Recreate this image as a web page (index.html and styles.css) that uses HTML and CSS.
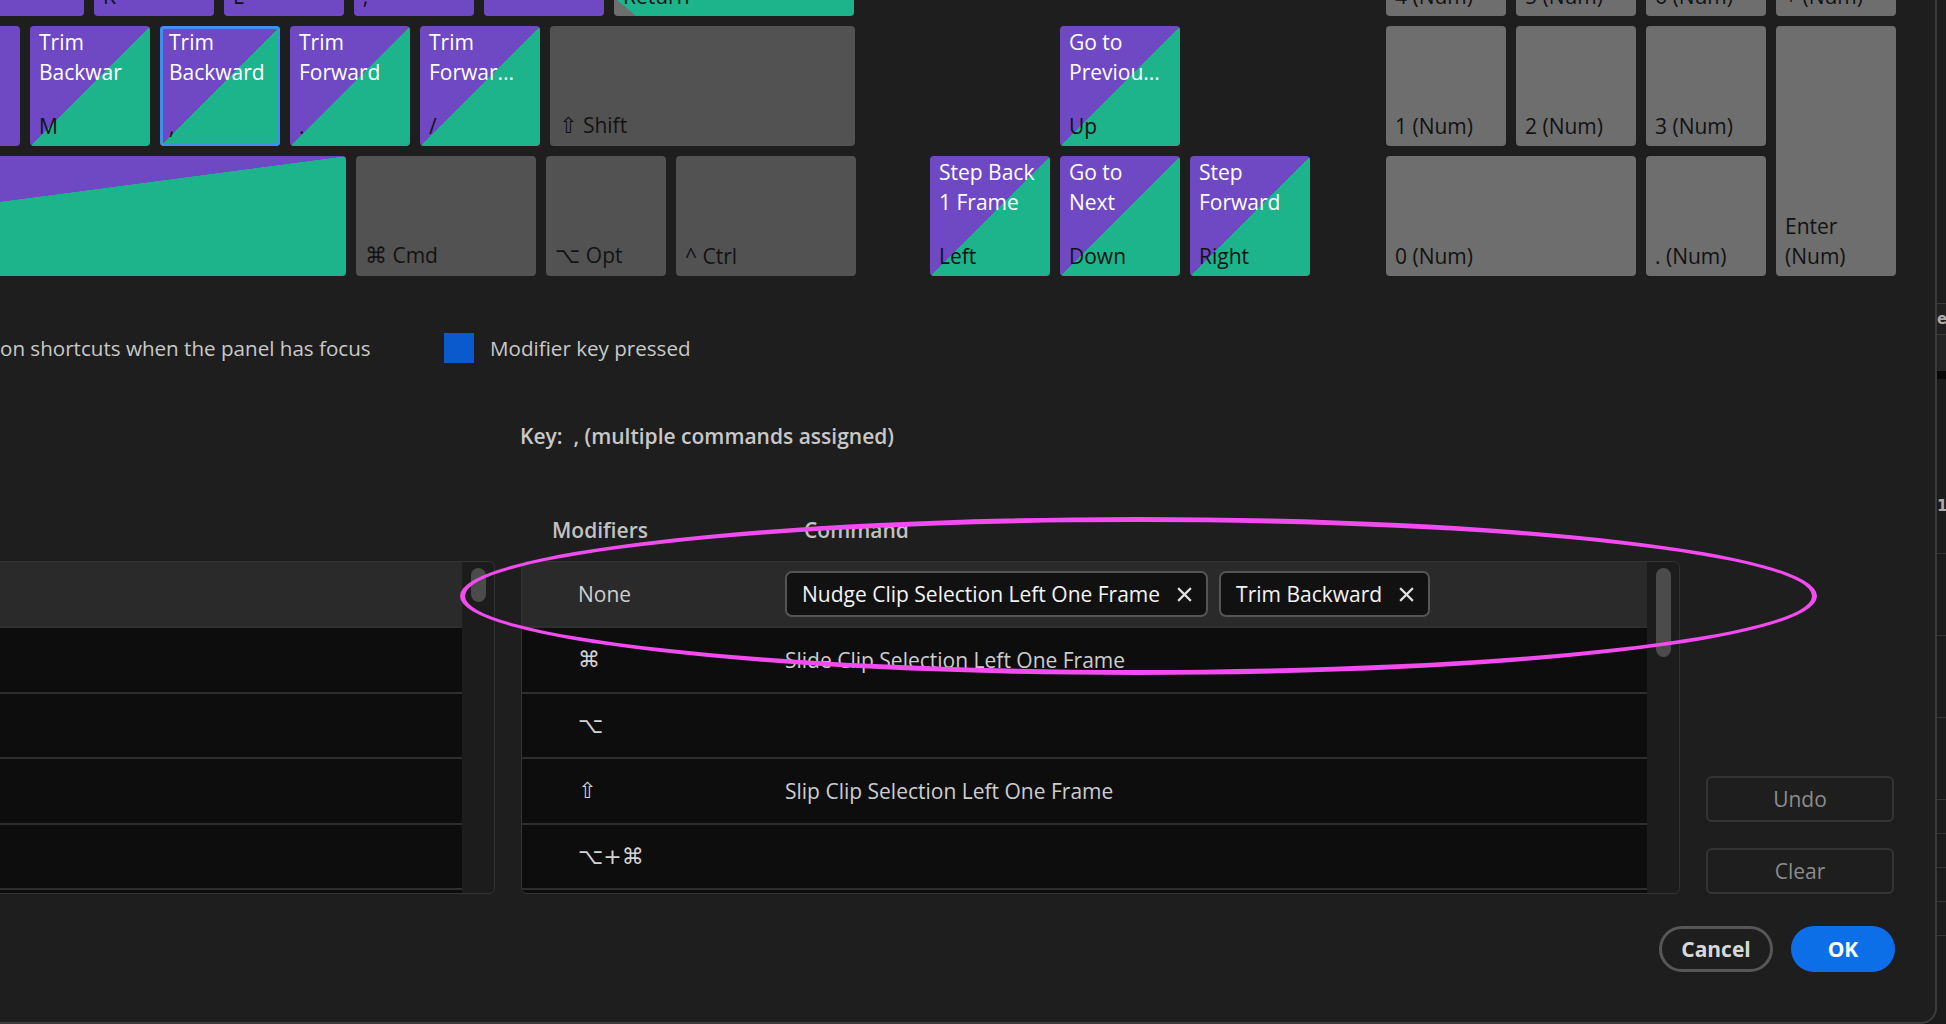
FILE: index.html
```html
<!DOCTYPE html>
<html>
<head>
<meta charset="utf-8">
<link rel="stylesheet" href="styles.css">
</head>
<body>
<div class="page">
  <div class="dialog">
    <div class="keyboard">
      <div class="main">
        <div class="krow r1">
          <div class="key purple"><span class="cmd"></span><span class="name">J</span></div>
          <div class="key purple"><span class="cmd"></span><span class="name">K</span></div>
          <div class="key purple"><span class="cmd"></span><span class="name">L</span></div>
          <div class="key purple"><span class="cmd"></span><span class="name">;</span></div>
          <div class="key purple"><span class="cmd"></span><span class="name">'</span></div>
          <div class="key ret"><span class="cmd"></span><span class="name">Return</span></div>
        </div>
        <div class="krow r2">
          <div class="key purple"><span class="cmd"></span><span class="name">N</span></div>
          <div class="key split"><span class="cmd">Trim<br>Backwar</span><span class="name">M</span></div>
          <div class="key split selected"><span class="cmd">Trim<br>Backward</span><span class="name">,</span></div>
          <div class="key split"><span class="cmd">Trim<br>Forward</span><span class="name">.</span></div>
          <div class="key split"><span class="cmd">Trim<br>Forwar...</span><span class="name">/</span></div>
          <div class="key gray shift"><span class="cmd"></span><span class="name"><span class="sym">⇧</span> Shift</span></div>
        </div>
        <div class="krow r3">
          <div class="key split space"><span class="cmd"></span><span class="name"></span></div>
          <div class="key gray wide"><span class="cmd"></span><span class="name"><span class="sym">⌘</span> Cmd</span></div>
          <div class="key gray"><span class="cmd"></span><span class="name"><span class="sym">⌥</span> Opt</span></div>
          <div class="key gray wide"><span class="cmd"></span><span class="name">^ Ctrl</span></div>
        </div>
      </div>
      <div class="arrows">
        <div class="key split up"><span class="cmd">Go to<br>Previou...</span><span class="name">Up</span></div>
        <div class="key split left"><span class="cmd">Step Back<br>1 Frame</span><span class="name">Left</span></div>
        <div class="key split down"><span class="cmd">Go to<br>Next</span><span class="name">Down</span></div>
        <div class="key split right"><span class="cmd">Step<br>Forward</span><span class="name">Right</span></div>
      </div>
      <div class="numpad">
        <div class="key num"><span class="cmd"></span><span class="name">4 (Num)</span></div>
        <div class="key num"><span class="cmd"></span><span class="name">5 (Num)</span></div>
        <div class="key num"><span class="cmd"></span><span class="name">6 (Num)</span></div>
        <div class="key num"><span class="cmd"></span><span class="name">+ (Num)</span></div>
        <div class="key num"><span class="cmd"></span><span class="name">1 (Num)</span></div>
        <div class="key num"><span class="cmd"></span><span class="name">2 (Num)</span></div>
        <div class="key num"><span class="cmd"></span><span class="name">3 (Num)</span></div>
        <div class="key num enter"><span class="cmd"></span><span class="name">Enter<br>(Num)</span></div>
        <div class="key num zero"><span class="cmd"></span><span class="name">0 (Num)</span></div>
        <div class="key num"><span class="cmd"></span><span class="name">. (Num)</span></div>
      </div>
    </div>

    <div class="legend">
      <span class="legend-text first">on shortcuts when the panel has focus</span>
      <span class="swatch"></span>
      <span class="legend-text">Modifier key pressed</span>
    </div>

    <div class="lower">
      <div class="keyline">Key:&nbsp; , (multiple commands assigned)</div>
      <div class="heads"><span class="h-mod">Modifiers</span><span class="h-cmd">Command</span></div>

      <div class="panel leftpanel">
        <div class="rows">
          <div class="row sel"></div>
          <div class="row"></div>
          <div class="row"></div>
          <div class="row"></div>
          <div class="row"></div>
        </div>
        <div class="scroll"><div class="thumb short"></div></div>
      </div>

      <div class="panel rightpanel">
        <div class="rows">
          <div class="row sel">
            <span class="mod">None</span>
            <span class="chips">
              <span class="chip">Nudge Clip Selection Left One Frame<svg class="x" viewBox="0 0 16 16"><path d="M2 2 L14 14 M14 2 L2 14"/></svg></span>
              <span class="chip">Trim Backward<svg class="x" viewBox="0 0 16 16"><path d="M2 2 L14 14 M14 2 L2 14"/></svg></span>
            </span>
          </div>
          <div class="row"><span class="mod sym">⌘</span><span class="cmdtext">Slide Clip Selection Left One Frame</span></div>
          <div class="row"><span class="mod sym">⌥</span><span class="cmdtext"></span></div>
          <div class="row"><span class="mod sym">⇧</span><span class="cmdtext">Slip Clip Selection Left One Frame</span></div>
          <div class="row"><span class="mod sym">⌥+⌘</span><span class="cmdtext"></span></div>
        </div>
        <div class="scroll"><div class="thumb long"></div></div>
      </div>

      <div class="sidebtns">
        <div class="btn-ghost">Undo</div>
        <div class="btn-ghost">Clear</div>
      </div>
    </div>

    <div class="footer">
      <div class="btn-cancel">Cancel</div>
      <div class="btn-ok">OK</div>
    </div>

    <div class="annotation"></div>
  </div>
  <div class="strip">
    <div class="s-top"></div>
    <div class="s-line"></div>
    <div class="s-text">ea</div>
    <div class="s-line"></div>
    <div class="s-gap"></div>
    <div class="s-black"></div>
    <div class="s-text2">1</div>
    <div class="s-cell"></div>
    <div class="s-cell"></div>
    <div class="s-cell"></div>
    <div class="s-cell small"></div>
    <div class="s-cell small"></div>
    <div class="s-cell small"></div>
    <div class="s-cell small"></div>
  </div>
</div>
</body>
</html>
```

FILE: styles.css
```css
html, body {
  margin: 0;
  padding: 0;
}
body {
  width: 1946px;
  height: 1024px;
  overflow: hidden;
  background: #1a1a1a;
  font-family: "Open Sans", "DejaVu Sans", sans-serif;
  font-size: 21px;
  color: #cccccc;
}
.page {
  display: flex;
  width: 1946px;
  height: 1024px;
}
.dialog {
  position: relative;
  width: 1937px;
  height: 1024px;
  box-sizing: border-box;
  background: #1e1e1e;
  border-right: 2px solid #3b3b3b;
  border-bottom: 2px solid #3b3b3b;
  border-bottom-right-radius: 16px;
  overflow: hidden;
  flex: 0 0 auto;
}

/* ---------- keyboard ---------- */
.keyboard {
  display: flex;
  margin-top: -104px;
  height: 380px;
}
.main {
  width: 856px;
  display: flex;
  flex-direction: column;
  gap: 10px;
  flex: 0 0 856px;
}
.krow {
  display: flex;
  justify-content: flex-end;
  gap: 10px;
  height: 120px;
}
.r1 { padding-right: 2px; }
.r2 { padding-right: 1px; }

.key {
  width: 120px;
  height: 120px;
  flex: 0 0 auto;
  box-sizing: border-box;
  border-radius: 4px;
  display: flex;
  flex-direction: column;
  justify-content: space-between;
  padding: 1px 8px 5px 9px;
  overflow: hidden;
  white-space: nowrap;
  font-size: 21px;
  line-height: 30px;
}
.key .cmd { color: #ffffff; }
.key .name { color: #121212; }
.key .sym { font-family: "DejaVu Sans", sans-serif; font-size: 22px; }

.purple { background: #6f49c3; }
.split { background: linear-gradient(to bottom right, #6f49c3 50%, #1db48c 50.2%); }
.gray { background: #525252; }
.num { background: #6e6e6e; }
.ret {
  width: 240px;
  background: linear-gradient(40deg, #6e6e6e 0 14px, #1db48c 14.5px);
}
.shift { width: 305px; }
.wide { width: 180px; }
.space { width: 909px; }
.selected { box-shadow: inset 0 0 0 3px #3f8ef0; }

.arrows {
  margin-left: 74px;
  display: grid;
  grid-template-columns: repeat(3, 120px);
  grid-template-rows: repeat(3, 120px);
  gap: 10px;
}
.arrows .up { grid-column: 2; grid-row: 2; }
.arrows .left { grid-column: 1; grid-row: 3; }
.arrows .down { grid-column: 2; grid-row: 3; }
.arrows .right { grid-column: 3; grid-row: 3; }

.numpad {
  margin-left: 76px;
  display: grid;
  grid-template-columns: repeat(4, 120px);
  grid-template-rows: repeat(3, 120px);
  gap: 10px;
}
.numpad .enter { grid-column: 4; grid-row: 2 / span 2; height: auto; }
.numpad .zero { grid-column: 1 / span 2; width: auto; }

/* ---------- legend ---------- */
.legend {
  display: flex;
  align-items: center;
  height: 30px;
  margin-top: 57px;
}
.legend-text {
  color: #c9c9c9;
  font-size: 20.6px;
  white-space: nowrap;
}
.legend-text.first {
  flex: 0 0 444px;
  overflow: hidden;
}
.swatch {
  width: 30px;
  height: 30px;
  background: #0b5acd;
  margin-right: 16px;
  flex: 0 0 auto;
}

/* ---------- lower grid ---------- */
.lower {
  display: grid;
  grid-template-columns: 505px 1159px 188px;
  column-gap: 26px;
  margin-left: -10px;
}
.keyline {
  grid-column: 2;
  grid-row: 1;
  margin-top: 58px;
  margin-left: -1px;
  line-height: 30px;
  font-weight: 600;
  color: #c8c8c8;
  white-space: nowrap;
}
.heads {
  grid-column: 2;
  grid-row: 2;
  margin-top: 64px;
  line-height: 30px;
  font-weight: 600;
  color: #c2c2c2;
  display: flex;
}
.h-mod { width: 283px; padding-left: 31px; box-sizing: border-box; }

.panel {
  grid-row: 3;
  margin-top: 16px;
  height: 333px;
  box-sizing: border-box;
  border: 1px solid #333333;
  border-radius: 6px;
  background: #1c1c1c;
  display: flex;
  overflow: hidden;
}
.leftpanel { grid-column: 1; }
.rightpanel { grid-column: 2; }
.rows {
  flex: 1;
  background: #0d0d0d;
  display: flex;
  flex-direction: column;
}
.row {
  height: 65.5px;
  flex: 0 0 auto;
  box-sizing: border-box;
  border-bottom: 2px solid #2e2e2e;
  display: flex;
  align-items: center;
  color: #cfcfcf;
  white-space: nowrap;
}
.row.sel {
  height: 66px;
  background: #2a2a2a;
  border-bottom-color: #2f2f2f;
}
.scroll {
  width: 32px;
  flex: 0 0 32px;
  box-sizing: border-box;
  padding: 6px 0 0 9px;
}
.thumb {
  width: 15px;
  background: #4b4b4b;
  border-radius: 8px;
}
.thumb.short { height: 34px; }
.thumb.long { height: 89px; }

.mod {
  width: 263px;
  flex: 0 0 263px;
  box-sizing: border-box;
  padding-left: 56px;
}
.mod.sym {
  font-family: "DejaVu Sans", sans-serif;
  font-size: 22px;
  color: #d4d4d4;
}
.chips {
  display: flex;
  gap: 11px;
}
.chip {
  height: 46px;
  box-sizing: border-box;
  border: 2px solid #555555;
  border-radius: 7px;
  background: #111111;
  padding: 0 13px 0 15px;
  display: inline-flex;
  align-items: center;
  gap: 16px;
  color: #f4f4f4;
}
.x {
  width: 17px;
  height: 17px;
  stroke: #e0e0e0;
  stroke-width: 2;
  fill: none;
}
.cmdtext { color: #cdcdcd; }

.sidebtns {
  grid-column: 3;
  grid-row: 3;
  align-self: end;
  display: flex;
  flex-direction: column;
  gap: 26px;
}
.btn-ghost {
  height: 46px;
  box-sizing: border-box;
  border: 2px solid #343434;
  border-radius: 6px;
  display: flex;
  align-items: center;
  justify-content: center;
  color: #8c8c8c;
}

/* ---------- footer ---------- */
.footer {
  display: flex;
  justify-content: flex-end;
  gap: 18px;
  margin-top: 32px;
  padding-right: 40px;
}
.btn-cancel, .btn-ok {
  height: 46px;
  box-sizing: border-box;
  border-radius: 23px;
  display: flex;
  align-items: center;
  justify-content: center;
  font-weight: 700;
}
.btn-cancel {
  width: 114px;
  border: 3px solid #575757;
  color: #d8d8d8;
}
.btn-ok {
  width: 104px;
  background: #0d6fe8;
  color: #ffffff;
}

/* ---------- annotation overlay ---------- */
.annotation {
  position: absolute;
  left: 460px;
  top: 517px;
  width: 1357px;
  height: 158px;
  box-sizing: border-box;
  border: 5px solid #f24cf0;
  border-radius: 50%;
  pointer-events: none;
}

/* ---------- background strip ---------- */
.strip {
  flex: 1;
  background: #1b1b1b;
  display: flex;
  flex-direction: column;
  overflow: hidden;
  font-family: "DejaVu Sans", sans-serif;
  font-weight: bold;
  color: #aaaaaa;
}
.s-top { height: 303px; background: #1d1d1d; }
.s-line { height: 1px; background: #3a3a3a; }
.s-text { height: 30px; line-height: 30px; font-size: 15px; background: #202020; }
.s-gap { height: 36px; background: #242424; }
.s-black { height: 8px; background: #080808; }
.s-text2 { height: 175px; padding-top: 118px; box-sizing: border-box; font-size: 15px; border-bottom: 1px solid #333; }
.s-cell { height: 82px; border-bottom: 1px solid #333; box-sizing: border-box; }
.s-cell.small { height: 34px; }
```
